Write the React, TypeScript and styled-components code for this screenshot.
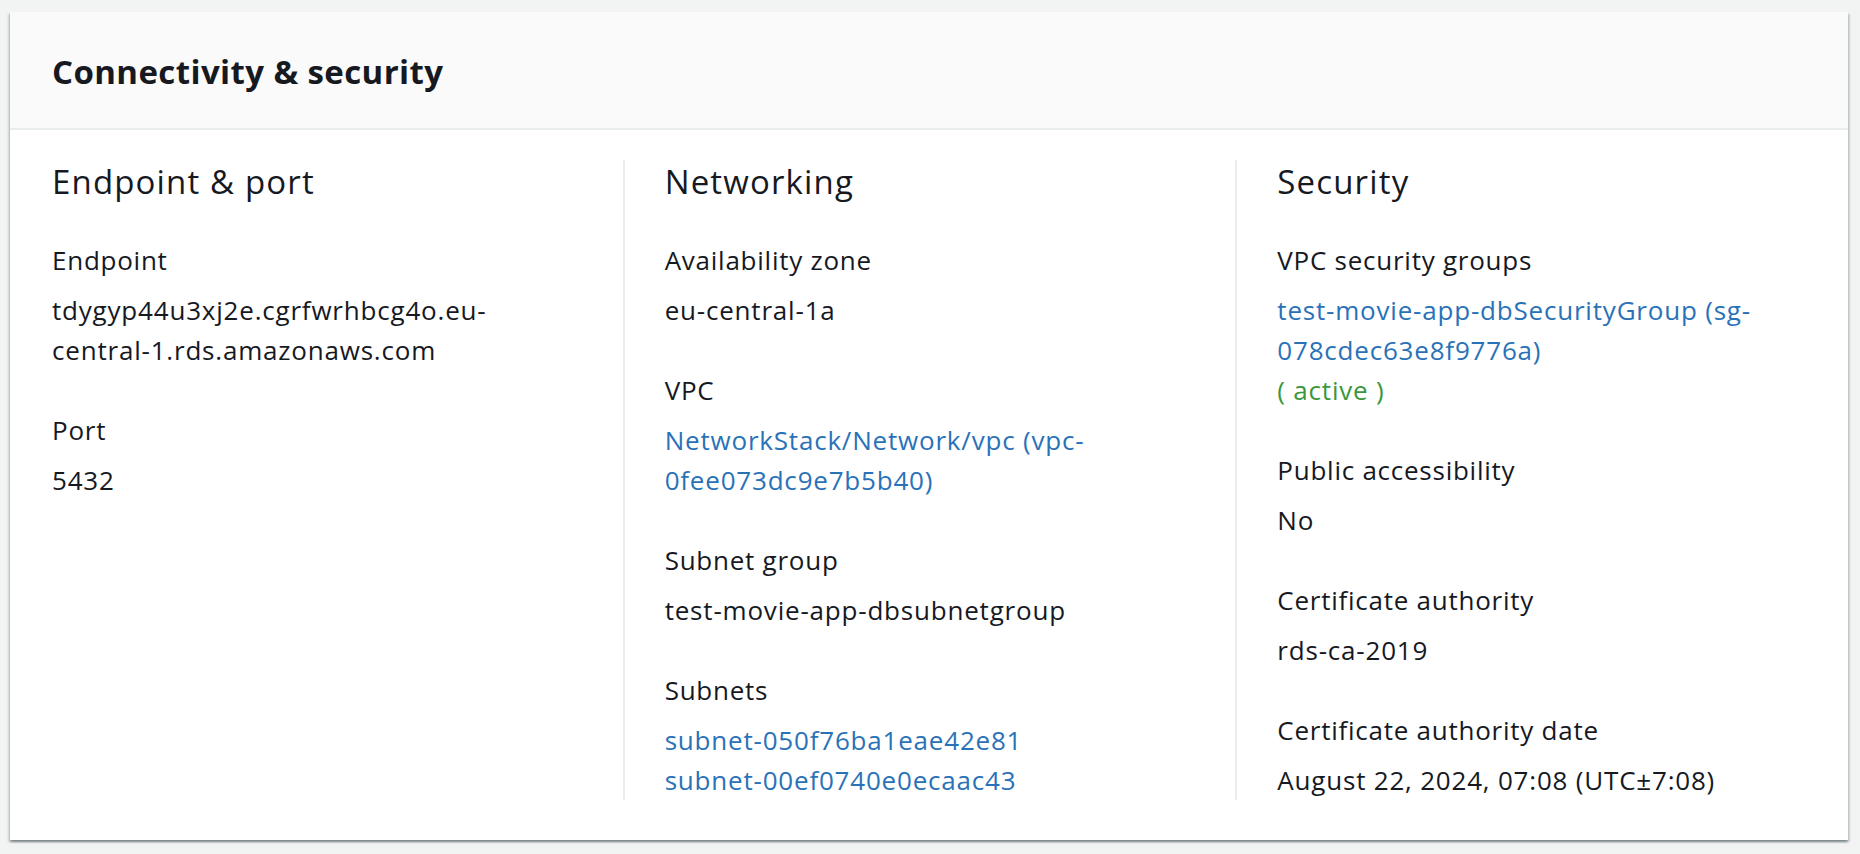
import React from "react";
import styled, { createGlobalStyle } from "styled-components";

const GlobalStyle = createGlobalStyle`
  html, body {
    margin: 0;
    padding: 0;
    background: #f2f3f3;
  }
  body {
    font-family: "Open Sans", "Noto Sans", Arial, sans-serif;
    color: #16191f;
    -webkit-font-smoothing: antialiased;
  }
`;

const Page = styled.div`
  padding: 12px 12px 14px 10px;
`;

const Card = styled.section`
  background: #ffffff;
  box-shadow: 0 2px 2px 0 rgba(0, 28, 36, 0.35), 2px 2px 2px 0 rgba(0, 28, 36, 0.12),
    -2px 2px 2px 0 rgba(0, 28, 36, 0.12);
`;

const Header = styled.header`
  background: #fafafa;
  padding: 38px 42px 34px;
  border-bottom: 2px solid #eaeded;
`;

const Title = styled.h2`
  margin: 0;
  font-size: 33px;
  line-height: 44px;
  font-weight: 700;
  letter-spacing: 0.4px;
  color: #16191f;
`;

const Body = styled.div`
  padding: 30px 0 40px;
  display: grid;
  grid-template-columns: repeat(3, 1fr);
`;

const Column = styled.div<{ $divided?: boolean }>`
  padding: 0 76px 0 ${(p) => (p.$divided ? "40px" : "42px")};
  border-left: ${(p) => (p.$divided ? "2px solid #eaeded" : "none")};
  min-width: 0;
`;

const ColumnTitle = styled.h3`
  margin: 0 0 36px;
  font-size: 33px;
  line-height: 44px;
  font-weight: 400;
  letter-spacing: 1.15px;
  color: #16191f;
`;

const PairList = styled.dl`
  margin: 0;
  display: flex;
  flex-direction: column;
  gap: 40px;
`;

const Pair = styled.div`
  display: flex;
  flex-direction: column;
`;

const Label = styled.dt`
  margin: 0 0 10px;
  font-size: 26px;
  line-height: 40px;
  letter-spacing: 0.75px;
  color: #16191f;
`;

const Value = styled.dd`
  margin: 0;
  display: flex;
  flex-direction: column;
`;

const Line = styled.span<{ $tone?: "text" | "link" | "success" }>`
  display: block;
  font-size: 26px;
  line-height: 40px;
  letter-spacing: 0.8px;
  color: ${(p) =>
    p.$tone === "link" ? "#2a72b8" : p.$tone === "success" ? "#3a983c" : "#16191f"};
  cursor: ${(p) => (p.$tone === "link" ? "pointer" : "auto")};
`;

type Tone = "text" | "link" | "success";
type Item = { label: string; lines: { text: string; tone?: Tone }[] };
type Col = { title: string; items: Item[] };

const columns: Col[] = [
  {
    title: "Endpoint & port",
    items: [
      {
        label: "Endpoint",
        lines: [{ text: "tdygyp44u3xj2e.cgrfwrhbcg4o.eu-central-1.rds.amazonaws.com" }],
      },
      { label: "Port", lines: [{ text: "5432" }] },
    ],
  },
  {
    title: "Networking",
    items: [
      { label: "Availability zone", lines: [{ text: "eu-central-1a" }] },
      {
        label: "VPC",
        lines: [{ text: "NetworkStack/Network/vpc (vpc-0fee073dc9e7b5b40)", tone: "link" }],
      },
      { label: "Subnet group", lines: [{ text: "test-movie-app-dbsubnetgroup" }] },
      {
        label: "Subnets",
        lines: [
          { text: "subnet-050f76ba1eae42e81", tone: "link" },
          { text: "subnet-00ef0740e0ecaac43", tone: "link" },
        ],
      },
    ],
  },
  {
    title: "Security",
    items: [
      {
        label: "VPC security groups",
        lines: [
          { text: "test-movie-app-dbSecurityGroup (sg-078cdec63e8f9776a)", tone: "link" },
          { text: "( active )", tone: "success" },
        ],
      },
      { label: "Public accessibility", lines: [{ text: "No" }] },
      { label: "Certificate authority", lines: [{ text: "rds-ca-2019" }] },
      {
        label: "Certificate authority date",
        lines: [{ text: "August 22, 2024, 07:08 (UTC±7:08)" }],
      },
    ],
  },
];

export default function App() {
  return (
    <>
      <GlobalStyle />
      <Page>
        <Card>
          <Header>
            <Title>Connectivity &amp; security</Title>
          </Header>
          <Body>
            {columns.map((col, i) => (
              <Column key={col.title} $divided={i > 0}>
                <ColumnTitle>{col.title}</ColumnTitle>
                <PairList>
                  {col.items.map((item) => (
                    <Pair key={item.label}>
                      <Label>{item.label}</Label>
                      <Value>
                        {item.lines.map((l) => (
                          <Line key={l.text} $tone={l.tone ?? "text"}>
                            {l.text}
                          </Line>
                        ))}
                      </Value>
                    </Pair>
                  ))}
                </PairList>
              </Column>
            ))}
          </Body>
        </Card>
      </Page>
    </>
  );
}
